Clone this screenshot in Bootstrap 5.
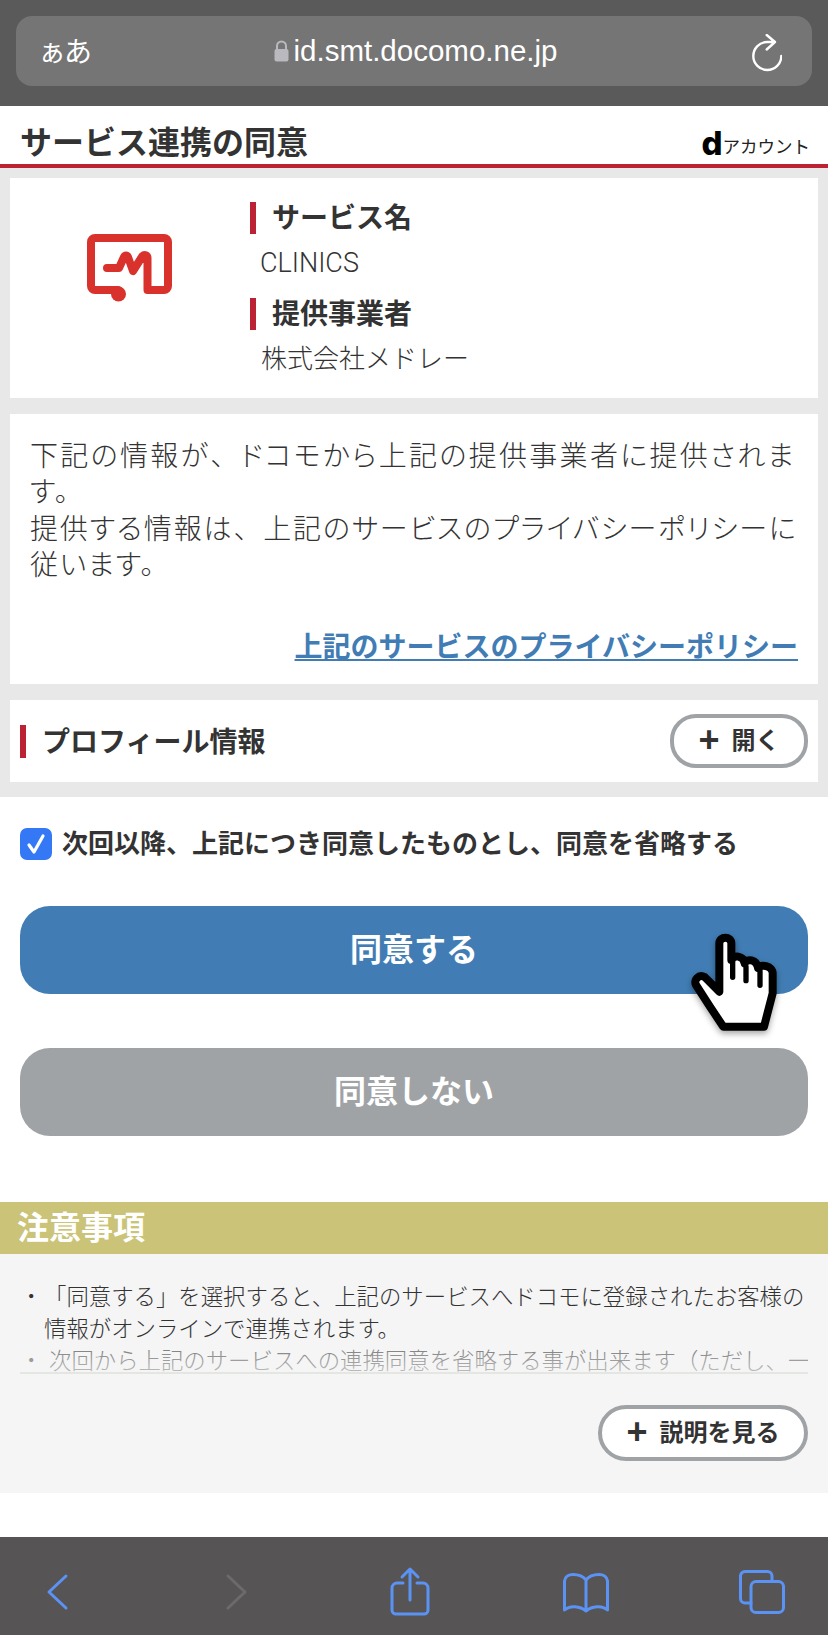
<!DOCTYPE html>
<html lang="ja">
<head>
    <meta charset="UTF-8">
    <title>サービス連携の同意</title>
    <link href="https://cdn.jsdelivr.net/npm/bootstrap@5.3.0/dist/css/bootstrap.min.css" rel="stylesheet">
    <style>
        body {
            font-family: "Liberation Sans", "Noto Sans CJK JP", sans-serif;
            color: #333;
            background: #fff;
            width: 828px;
            height: 1635px;
            overflow: hidden;
        }
        .url-bar { height: 106px; background: #5a5a5a; padding: 16px 16px 20px; }
        .url-box { height: 70px; background: #757575; border-radius: 16px; color: #fff; padding: 0 30px 0 22px; }
        .url-kana { font-size: 28px; width: 60px; margin-top: 4px; letter-spacing: -2px; }
        .url-host { margin-right: 17px; }
        .url-text { font-size: 29.500px; margin-left: 5px; }
        .reload-mark { margin-top: 3px; }
        .page-head { height: 62px; border-bottom: 4px solid #bb2233; padding: 0 20px; }
        .page-title { font-size: 32px; font-weight: 700; line-height: 1; margin: 0 0 5px; }
        .acct-wrap { margin-right: -2px; }
        .acct-d { font-family: Inter, "Liberation Sans", sans-serif; font-size: 33px; font-weight: 800; color: #000; line-height: 1; }
        .acct-text { font-size: 17.500px; color: #222; }
        .grey-wrap { background: #e8e8e8; padding: 10px 10px 15px; }
        .info-panel { background: #fff; }
        .svc-panel { height: 220px; margin-bottom: 16px; }
        .logo-col { width: 240px; padding-top: 56px; }
        .logo-mark { filter: blur(.5px); }
        .red-head { border-left: 6px solid #bb2233; padding: 1px 0 0 16px; font-size: 28px; font-weight: 700; line-height: 31px; }
        .svc-value { font-size: 26px; line-height: 32px; margin: 13px 0 19px 11px; font-weight: 300; }
        .svc-latin { font-family: Roboto, "Liberation Sans", sans-serif; font-size: 27px; margin-left: 10px; }
        .desc-panel { height: 270px; margin-bottom: 16px; padding: 25px 20px 0; font-size: 28px; line-height: 36.400px; font-weight: 300; font-feature-settings: "palt"; letter-spacing: 1.850px; }
        .desc-first { letter-spacing: 2.300px; }
        .full-mark { font-feature-settings: normal; }
        .policy-link { font-weight: 700; color: #417db4; letter-spacing: 0; font-feature-settings: normal; margin-top: 45px; }
        .profile-panel { height: 82px; padding: 0 10px; }
        .profile-name { padding-top: 1px; }
        .outline-btn { border: 4px solid #a0a3a6; border-radius: 26px; background: #fff; color: #333; font-weight: 700; font-size: 24px; height: 54px; }
        .open-btn { width: 138px; }
        .more-btn { width: 210px; height: 56px; border-radius: 28px; }
        .plus-mark { font-size: 36px; font-weight: 700; line-height: 1; margin-right: 12px; margin-top: -3px; }
        .agree-wrap { padding: 31px 20px 0; }
        .check-box { width: 32px; height: 32px; border-radius: 7px; background: #3478f6; flex: none; margin-right: 10px; }
        .check-text { font-size: 26px; font-weight: 700; line-height: 32px; }
        .big-btn { height: 88px; border-radius: 30px; width: 100%; border: 0; color: #fff; font-size: 32px; font-weight: 700; }
        .btn-agree { background: #417db4; margin-top: 46px; }
        .btn-deny { background: #a0a3a6; margin-top: 54px; }
        .notice-head { background: #cbc378; color: #fff; font-size: 32px; font-weight: 700; height: 52px; line-height: 52px; padding-left: 17px; margin-top: 66px; }
        .notice-body { background: #f5f5f5; height: 239px; padding: 28px 20px 0; }
        .notice-clip { height: 92px; overflow: hidden; border-bottom: 2px solid #e4e6e2; position: relative; font-size: 22.400px; line-height: 32px; font-weight: 300; }
        .notice-clip::after { content: ""; position: absolute; left: 0; right: 0; bottom: 0; height: 34px; background: linear-gradient(rgba(245,245,245,.25), rgba(245,245,245,.7)); }
        .notice-row { padding-left: 24px; text-indent: -24px; margin-right: -4px; }
        .notice-row-next { padding-left: 29px; text-indent: -29px; }
        .notice-bullet { display: inline-block; width: 24px; text-indent: 0; }
        .notice-row-next .notice-bullet { width: 29px; }
        .more-row { margin-top: 31px; }
        .bottom-bar { height: 98px; margin-top: 44px; background: #575455; padding: 37px 0 0 47px; }
        .bar-icon { display: block; overflow: visible; fill: none; stroke: #5b93f5; stroke-width: 3; stroke-linecap: round; stroke-linejoin: round; }
        .bar-forward { stroke: #6c6a6a; margin-left: 160px; }
        .bar-share { margin-left: 143px; margin-top: -7px; }
        .bar-book { margin-left: 133px; margin-top: -1px; }
        .bar-tabs { margin-left: 130px; margin-top: -4px; }
        .hand-cursor { position: absolute; left: 660px; top: 910px; width: 140px; height: 130px; filter: drop-shadow(0 3px 3px rgba(0,0,0,.35)); }
    </style>
</head>
<body class="position-relative">

<!-- Safariのアドレスバー -->
<div class="url-bar">
    <div class="url-box d-flex align-items-center">
        <div class="url-kana">ぁあ</div>
        <div class="url-host flex-grow-1 d-flex justify-content-center align-items-center">
            <svg width="15" height="22" viewBox="0 0 15 22"><path d="M3 10V6a4.500 4.500 0 0 1 9 0v4" fill="none" stroke="#b9b9bf" stroke-width="2"/><rect x="0.500" y="9" width="14" height="12.500" rx="2" fill="#b9b9bf"/></svg>
            <span class="url-text">id.smt.docomo.ne.jp</span>
        </div>
        <svg class="reload-mark" width="32" height="38" viewBox="0 0 32 38" fill="none" stroke="#fff" stroke-width="2.400" stroke-linecap="round" stroke-linejoin="round"><path d="M25 8H17.300A14 14 0 1 0 31.300 22M16.700 1L25 8l-8.300 7.500"/></svg>
    </div>
</div>

<div class="page-head d-flex justify-content-between align-items-end">
    <h1 class="page-title">サービス連携の同意</h1>
    <div class="acct-wrap d-flex align-items-end mb-1"><span class="acct-d">d</span><span class="acct-text">アカウント</span></div>
</div>

<div class="grey-wrap">
    <div class="info-panel svc-panel d-flex">
        <div class="logo-col d-flex align-items-start justify-content-center">
            <svg class="logo-mark" width="86" height="68" viewBox="0 0 86 68" fill="none" stroke="#d9312b" stroke-width="8" stroke-linejoin="round" stroke-linecap="round"><path d="M31 56H8a4 4 0 0 1-4-4V8a4 4 0 0 1 4-4h69a4 4 0 0 1 4 4v44a4 4 0 0 1-4 4H60.500V24c0-3-3-4-5-2L46 37 41 23c-1-2-3-2-4 0l-5 11H20"/><circle cx="31.500" cy="60" r="7.500" fill="#d9312b" stroke="none"/></svg>
        </div>
        <div class="pt-4">
            <div class="red-head">サービス名</div>
            <div class="svc-value svc-latin">CLINICS</div>
            <div class="red-head">提供事業者</div>
            <div class="svc-value">株式会社メドレー</div>
        </div>
    </div>

    <div class="info-panel desc-panel">
        <div><span class="desc-first">下記の情報が</span><span class="desc-first full-mark">、</span><span class="desc-first">ドコモから上記の提供事業者に提供されま</span><br><span>す。</span><br><span>提供する情報は</span><span class="full-mark">、</span><span>上記のサービスのプライバシーポリシーに</span><br><span>従います。</span></div>
        <div class="text-end policy-link"><a href="#" class="policy-link">上記のサービスのプライバシーポリシー</a></div>
    </div>

    <div class="info-panel profile-panel d-flex justify-content-between align-items-center">
        <div class="red-head"><div class="profile-name">プロフィール情報</div></div>
        <button type="button" class="outline-btn open-btn d-flex align-items-center justify-content-center p-0"><span class="plus-mark">+</span>開く</button>
    </div>
</div>

<div class="agree-wrap">
    <div class="d-flex align-items-center">
        <div class="check-box d-flex align-items-center justify-content-center">
            <svg width="22" height="22" viewBox="0 0 22 22" fill="none" stroke="#fff" stroke-width="3.200" stroke-linecap="round" stroke-linejoin="round"><path d="M4 12l5 7L18 3"/></svg>
        </div>
        <div class="check-text">次回以降、上記につき同意したものとし、同意を省略する</div>
    </div>
    <button type="button" class="big-btn btn-agree d-block">同意する</button>
    <button type="button" class="big-btn btn-deny d-block">同意しない</button>
</div>

<div class="notice-head">注意事項</div>
<div class="notice-body">
    <div class="notice-clip">
        <div class="notice-row"><span class="notice-bullet">・</span>「同意する」を選択すると、上記のサービスへドコモに登録されたお客様の情報がオンラインで連携されます。</div>
        <div class="notice-row notice-row-next"><span class="notice-bullet">・</span>次回から上記のサービスへの連携同意を省略する事が出来ます（ただし、一定期間経過後は再度同意が必要です）。</div>
    </div>
    <div class="more-row d-flex justify-content-end">
        <button type="button" class="outline-btn more-btn d-flex align-items-center justify-content-center p-0"><span class="plus-mark">+</span>説明を見る</button>
    </div>
</div>

<!-- Safariのツールバー -->
<div class="bottom-bar d-flex align-items-start">
    <svg class="bar-icon" width="20" height="36" viewBox="0 0 20 36"><path d="M19 2L2 18l17 16"/></svg>
    <svg class="bar-icon bar-forward" width="20" height="36" viewBox="0 0 20 36"><path d="M1 2l17 16L1 34"/></svg>
    <svg class="bar-icon bar-share" width="40" height="50" viewBox="0 0 40 50"><path d="M13 16H7a5 5 0 0 0-5 5v22a4 4 0 0 0 4 4h28a4 4 0 0 0 4-4V21a5 5 0 0 0-5-5h-6M20 33V2M12 10l8-8 8 8"/></svg>
    <svg class="bar-icon bar-book" width="46" height="40" viewBox="0 0 46 40"><path d="M23 7C20 3 15 1.500 10 1.500 6 1.500 2 3.500 1.500 8v29C7 32 17 33 23 38c6-5 16-6 21.500-1V8C44 3.500 40 1.500 36 1.500 31 1.500 26 3 23 7zM23 7v31"/></svg>
    <svg class="bar-icon bar-tabs" width="46" height="44" viewBox="0 0 46 44"><path d="M33 11V6a4.500 4.500 0 0 0-4.500-4.500H6A4.500 4.500 0 0 0 1.500 6v22.500A4.500 4.500 0 0 0 6 33h6"/><rect x="12" y="11.500" width="32.500" height="31" rx="5"/></svg>
</div>

<svg class="hand-cursor" viewBox="0 0 420 390" fill="#fff" stroke="#000" stroke-width="24" stroke-linejoin="round" stroke-linecap="round"><path d="M190 350L150 290 108 225c-8-14 8-34 26-24l44 44V100c0-22 36-22 36 0v50c6-16 36-14 40 10 6-16 36-12 40 14 6-12 44-8 44 16v60l-26 100z"/><path d="M218 150v52M258 170v42M300 182v44" fill="none" stroke-width="16"/></svg>

<script src="https://cdn.jsdelivr.net/npm/bootstrap@5.3.0/dist/js/bootstrap.bundle.min.js"></script>
</body>
</html>
